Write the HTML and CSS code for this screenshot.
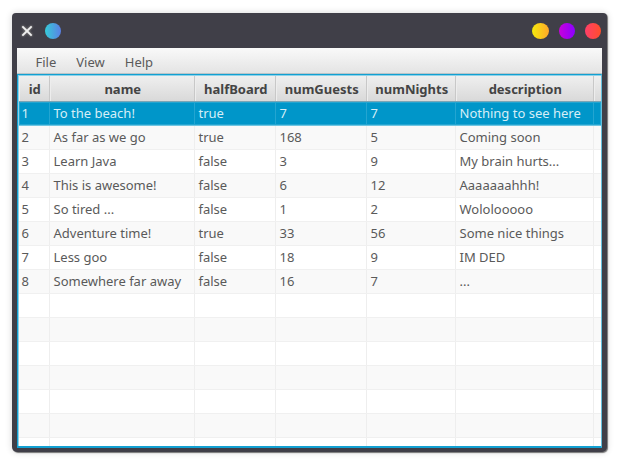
FILE: index.html
```
<!DOCTYPE html>
<html lang="en">
<head>
<meta charset="utf-8">
<title>Bookings</title>
<link rel="stylesheet" href="styles.css">
</head>
<body>
<div class="window">
  <header class="titlebar">
    <svg class="close" viewBox="0 0 12 12"><path d="M2 2L10 10M10 2L2 10"/></svg>
    <span class="dot app"></span>
    <span class="dot min"></span>
    <span class="dot max"></span>
    <span class="dot quit"></span>
  </header>
  <nav class="menu"><span>File</span><span>View</span><span>Help</span></nav>
  <main class="table">
    <div class="row head"><span>id</span><span>name</span><span>halfBoard</span><span>numGuests</span><span>numNights</span><span>description</span><span></span></div>
    <div class="row selected"><span>1</span><span>To the beach!</span><span>true</span><span>7</span><span>7</span><span>Nothing to see here</span><span></span></div>
    <div class="row"><span>2</span><span>As far as we go</span><span>true</span><span>168</span><span>5</span><span>Coming soon</span><span></span></div>
    <div class="row"><span>3</span><span>Learn Java</span><span>false</span><span>3</span><span>9</span><span>My brain hurts...</span><span></span></div>
    <div class="row"><span>4</span><span>This is awesome!</span><span>false</span><span>6</span><span>12</span><span>Aaaaaaahhh!</span><span></span></div>
    <div class="row"><span>5</span><span>So tired ...</span><span>false</span><span>1</span><span>2</span><span>Wololooooo</span><span></span></div>
    <div class="row"><span>6</span><span>Adventure time!</span><span>true</span><span>33</span><span>56</span><span>Some nice things</span><span></span></div>
    <div class="row"><span>7</span><span>Less goo</span><span>false</span><span>18</span><span>9</span><span>IM DED</span><span></span></div>
    <div class="row"><span>8</span><span>Somewhere far away</span><span>false</span><span>16</span><span>7</span><span>...</span><span></span></div>
    <div class="row"><span></span><span></span><span></span><span></span><span></span><span></span><span></span></div>
    <div class="row"><span></span><span></span><span></span><span></span><span></span><span></span><span></span></div>
    <div class="row"><span></span><span></span><span></span><span></span><span></span><span></span><span></span></div>
    <div class="row"><span></span><span></span><span></span><span></span><span></span><span></span><span></span></div>
    <div class="row"><span></span><span></span><span></span><span></span><span></span><span></span><span></span></div>
    <div class="row"><span></span><span></span><span></span><span></span><span></span><span></span><span></span></div>
    <div class="row"><span></span><span></span><span></span><span></span><span></span><span></span><span></span></div>
  </main>
</div>
</body>
</html>
```
FILE: styles.css
```
* { box-sizing: border-box; }
body {
  margin: 0;
  padding: 13px 13px 13px 12px;
  background: #fff;
  font: 13px/18px "Noto Sans", sans-serif;
  color: #5a5a5a;
}
.window {
  display: flex;
  flex-direction: column;
  width: 595px;
  height: 439px;
  padding: 0 5px 4px;
  border-radius: 4px 4px 5px 5px;
  background: #403f48;
  box-shadow: 1px 1px 1px rgba(0, 0, 0, .5), 0 0 7px rgba(0, 0, 0, .16);
}
.titlebar {
  display: flex;
  flex: none;
  align-items: center;
  height: 35px;
  padding-left: 3px;
}
.close {
  width: 14px;
  height: 14px;
  fill: none;
  stroke: #f0f0f0;
  stroke-width: 1.6;
  filter: drop-shadow(0 0 1px #aaa79f);
}
.dot { width: 16px; height: 16px; border-radius: 50%; }
.app { margin-left: 10.5px; background: linear-gradient(90deg, #36cbd8, #5b80e6); }
.min { width: 17px; margin-left: auto; background: linear-gradient(90deg, #f5ea0c, #ffa82a); }
.max { margin-left: 10px; background: linear-gradient(90deg, #c800dc, #8b00ff); }
.quit { margin: 0 1.5px 0 10px; background: linear-gradient(90deg, #ff3f69, #ff4e2b); }
.menu {
  display: flex;
  flex: none;
  gap: 20px;
  height: 26px;
  padding: 5px 18.5px 0;
  border-bottom: 1px solid #b9c4c8;
  background: linear-gradient(#f9f9f9, #e4e4e4);
}
.table {
  flex: 1;
  min-height: 0;
  overflow: hidden;
  border: 1px solid #12a0d2;
  border-right-color: #65bfdc;
  border-bottom-width: 2px;
  background: #fff;
  box-shadow: inset 1px 1px #8ed2e9;
  padding: 1px 0 0 1px;
}
.row {
  display: grid;
  grid-template-columns: 31px 145px 81px 91px 89px 138px 1fr;
  height: 24px;
  border-bottom: 1px solid #f0f0f0;
}
.row:nth-child(odd) { background: #f9f9f9; }
.row span {
  padding: 2px 0 0 3.5px;
  border-right: 1px solid #eee;
  white-space: nowrap;
}
.row span:first-child { padding-left: 2.5px; }
.row span:last-child { border-right: 0; }
.row.head {
  height: 26px;
  border-bottom: 1px solid #7aa5b5;
  background: linear-gradient(#efefef, #d9d9d9);
  color: #444;
  font-weight: 700;
}
.row.head span {
  padding: 4px 0 0 1.5px;
  border-right-color: #c8c8c8;
  box-shadow: inset 1px 0 #ededed;
  text-align: center;
}
.row.selected {
  border-bottom-color: #70c6e2;
  background: #0096c9;
  box-shadow: inset 0 0 0 1px #23a5d1;
  color: #d6eef7;
}
.row.selected span { border-right-color: #23a5d1; }
```
